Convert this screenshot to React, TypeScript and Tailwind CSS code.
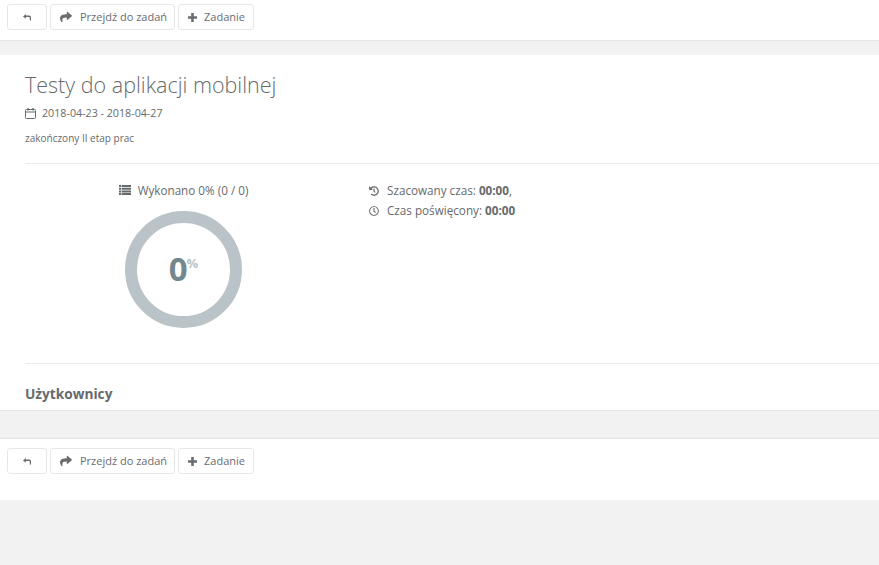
import { FaShare, FaHistory, FaRegClock } from "react-icons/fa";

function BackIcon() {
  return (
    <svg width="8" height="7" viewBox="0 0 8 7" fill="currentColor">
      <path d="M0 2.4 2.8 0v1.6H6.4Q8 1.6 8 3.2V6.5H6.8V3.8Q6.8 3 6 3H2.8v1.8Z" />
    </svg>
  );
}

function PlusIcon() {
  return (
    <svg width="9" height="9" viewBox="0 0 9 9" fill="currentColor">
      <path d="M3.2 0h2.6v3.2H9v2.6H5.8V9H3.2V5.8H0V3.2h3.2Z" />
    </svg>
  );
}

function ListIcon() {
  return (
    <svg width="12" height="10" viewBox="0 0 12 10" fill="currentColor">
      <path d="M0 0h2.4v2H0ZM3 0h9v2H3ZM0 2.7h2.4v2H0ZM3 2.7h9v2H3ZM0 5.4h2.4v2H0ZM3 5.4h9v2H3ZM0 8h2.4v2H0ZM3 8h9v2H3Z" />
    </svg>
  );
}

function CalendarIcon() {
  return (
    <svg width="11" height="11" viewBox="0 0 11 11" fill="none" stroke="currentColor">
      <rect x="0.5" y="1.5" width="10" height="9" rx="1" />
      <path d="M0.5 4h10" />
      <path d="M3 0v2.5M8 0v2.5" strokeWidth="1.4" />
    </svg>
  );
}

function Toolbar() {
  return (
    <div className="flex gap-[3px] pl-[7px]">
      <button className="flex h-[26px] w-10 items-center justify-center rounded-[3px] border border-[#e6e8e8] bg-white text-[#6a6c6f]">
        <BackIcon />
      </button>
      <button className="flex h-[26px] w-[125px] items-center rounded-[3px] border border-[#e6e8e8] bg-white pl-[9px] text-[#6a6c6f]">
        <FaShare className="text-[12px]" />
        <span className="ml-[8px] text-[11px]">Przejdź do zadań</span>
      </button>
      <button className="flex h-[26px] w-[76px] items-center rounded-[3px] border border-[#e6e8e8] bg-white pl-[9px] text-[#6a6c6f]">
        <PlusIcon />
        <span className="ml-[7px] text-[11px]">Zadanie</span>
      </button>
    </div>
  );
}

export default function App() {
  return (
    <div className="h-[565px] overflow-hidden bg-[#f2f2f2] font-['Open_Sans',sans-serif] text-[#676a6c]">
      <div className="h-[41px] border-b border-[#e4e5e7] bg-white pt-1">
        <Toolbar />
      </div>
      <div className="mt-[14px] h-[356px] border-b border-[#e4e5e7] bg-white pl-[25px]">
        <h1 className="pt-[14px] text-[21.5px] leading-[32px] font-light">Testy do aplikacji mobilnej</h1>
        <div className="mt-[4px] flex items-center text-[10.7px] leading-[16px]">
          <CalendarIcon />
          <span className="ml-[6px]">2018-04-23 - 2018-04-27</span>
        </div>
        <p className="mt-[10px] text-[10px] leading-[14px]">zakończony II etap prac</p>
        <div className="mt-[18px] h-[201px] border-y border-[#eaeaea]">
          <div className="flex">
            <div className="flex w-[317px] flex-col items-center">
              <div className="mt-[18px] flex items-center text-[11.7px] leading-[16px]">
                <ListIcon />
                <span className="ml-[7px]">Wykonano 0% (0 / 0)</span>
              </div>
              <div className="relative mt-[13px] flex h-[117px] w-[117px] items-center justify-center rounded-full border-[12px] border-[#bac3c8]">
                <span className="mb-[3px] text-[33px] leading-none font-bold text-[#74878c]">0</span>
                <span className="mb-[13px] -ml-px text-[13px] leading-none font-bold text-[#bac3c8]">%</span>
              </div>
            </div>
            <div className="mt-[17px] ml-[27px] text-[11.7px]">
              <div className="flex h-5 items-center">
                <FaHistory className="text-[10px]" />
                <span className="ml-[8px]">
                  Szacowany czas: <b>00:00</b>,
                </span>
              </div>
              <div className="flex h-5 items-center">
                <FaRegClock className="text-[10px]" />
                <span className="ml-[8px]">
                  Czas poświęcony: <b>00:00</b>
                </span>
              </div>
            </div>
          </div>
        </div>
        <h2 className="mt-[20px] text-[13.7px] leading-[20px] font-bold">Użytkownicy</h2>
      </div>
      <div className="mt-[27px] h-[62px] border-t border-[#e4e5e7] bg-white pt-[9px]">
        <Toolbar />
      </div>
    </div>
  );
}
